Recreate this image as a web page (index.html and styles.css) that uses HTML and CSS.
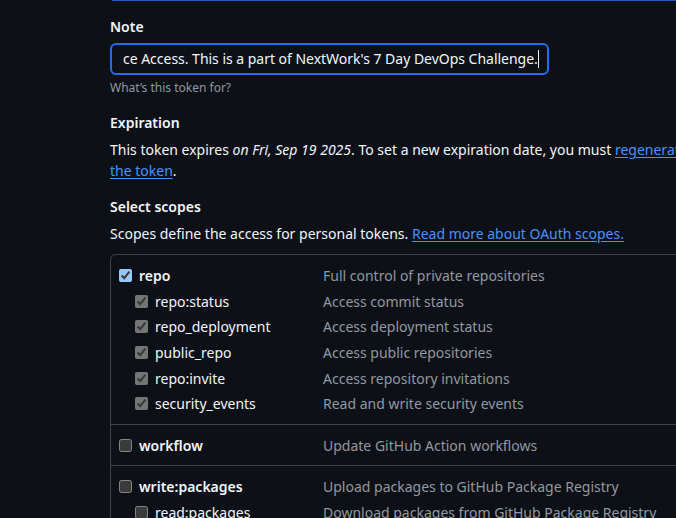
FILE: index.html
```html
<!DOCTYPE html>
<html lang="en">
<head>
<meta charset="utf-8">
<title>New personal access token</title>
<link rel="stylesheet" href="styles.css">
</head>
<body>
<div class="page">
  <div class="prev"></div>

  <div class="field first">
    <div class="label">Note</div>
    <div class="input"><span class="value">ce Access. This is a part of NextWork's 7 Day DevOps Challenge.</span><span class="caret"></span></div>
    <p class="hint">What’s this token for?</p>
  </div>

  <div class="field">
    <div class="label">Expiration</div>
    <p class="text">This token expires <em>on Fri, Sep 19 2025</em>. To set a new expiration date, you must <a href="#" class="link">regenerate the token</a>.</p>
  </div>

  <div class="field">
    <div class="label">Select scopes</div>
    <p class="text">Scopes define the access for personal tokens. <a href="#" class="link">Read more about OAuth scopes.</a></p>
  </div>

  <div class="scopes">
    <div class="group">
      <div class="row top"><label class="name"><input type="checkbox" checked>repo</label><span class="desc">Full control of private repositories</span></div>
      <div class="row sub"><label class="name"><input type="checkbox" checked disabled>repo:status</label><span class="desc">Access commit status</span></div>
      <div class="row sub"><label class="name"><input type="checkbox" checked disabled>repo_deployment</label><span class="desc">Access deployment status</span></div>
      <div class="row sub"><label class="name"><input type="checkbox" checked disabled>public_repo</label><span class="desc">Access public repositories</span></div>
      <div class="row sub"><label class="name"><input type="checkbox" checked disabled>repo:invite</label><span class="desc">Access repository invitations</span></div>
      <div class="row sub"><label class="name"><input type="checkbox" checked disabled>security_events</label><span class="desc">Read and write security events</span></div>
    </div>
    <div class="group">
      <div class="row top"><label class="name"><input type="checkbox">workflow</label><span class="desc">Update GitHub Action workflows</span></div>
    </div>
    <div class="group">
      <div class="row top"><label class="name"><input type="checkbox">write:packages</label><span class="desc">Upload packages to GitHub Package Registry</span></div>
      <div class="row sub"><label class="name"><input type="checkbox">read:packages</label><span class="desc">Download packages from GitHub Package Registry</span></div>
    </div>
  </div>
</div>
</body>
</html>
```

FILE: styles.css
```css
html, body {
  margin: 0;
  padding: 0;
  background: #0d1117;
  overflow: hidden;
  color-scheme: dark;
}

body {
  font-family: "Noto Sans", "DejaVu Sans", sans-serif;
  font-size: 14px;
  line-height: 21px;
  color: #f0f6fc;
  width: 676px;
  height: 518px;
}

.page {
  margin-left: 110px;
  width: 592px;
}

.prev {
  height: 1px;
  margin-left: 2px;
  background: #1f5bb8;
}

.field {
  margin-top: 15px;
}

.label {
  font-weight: 600;
  font-size: 14px;
  line-height: 21px;
  margin-bottom: 6px;
}

.input {
  box-sizing: border-box;
  width: 439px;
  height: 32px;
  border: 2px solid #1f6feb;
  border-radius: 6px;
  padding: 0 4px 0 11px;
  display: flex;
  align-items: center;
  white-space: nowrap;
  overflow: hidden;
  color: #f0f6fc;
  line-height: 20px;
}

.value {
  flex: none;
  letter-spacing: -0.02px;
}

.caret {
  flex: none;
  display: inline-block;
  width: 1px;
  height: 18px;
  background: #f0f6fc;
}

.hint {
  margin: 4px 0 0;
  font-size: 12px;
  line-height: 18px;
  color: #9198a1;
}

.text {
  margin: 0;
}

.text em {
  font-style: italic;
}

.link {
  color: #4493f8;
  text-decoration: underline;
  text-underline-offset: 2px;
}

.scopes {
  margin-top: 10px;
  border: 1px solid #3d444d;
  border-radius: 6px;
}

.group {
  padding: 8px 0 7px 8px;
  border-top: 1px solid #3d444d;
}

.group:first-child {
  border-top: 0;
}

.row {
  display: grid;
  grid-template-columns: 204px 1fr;
  height: 25.6px;
  align-items: center;
}

.name {
  display: flex;
  align-items: center;
  white-space: nowrap;
}

.name input {
  margin: 0 7px 0 0;
  width: 13px;
  height: 13px;
}

.row.top .name {
  font-weight: 600;
}

.row.sub .name {
  padding-left: 16px;
}

.desc {
  color: #9198a1;
  white-space: nowrap;
}
```
